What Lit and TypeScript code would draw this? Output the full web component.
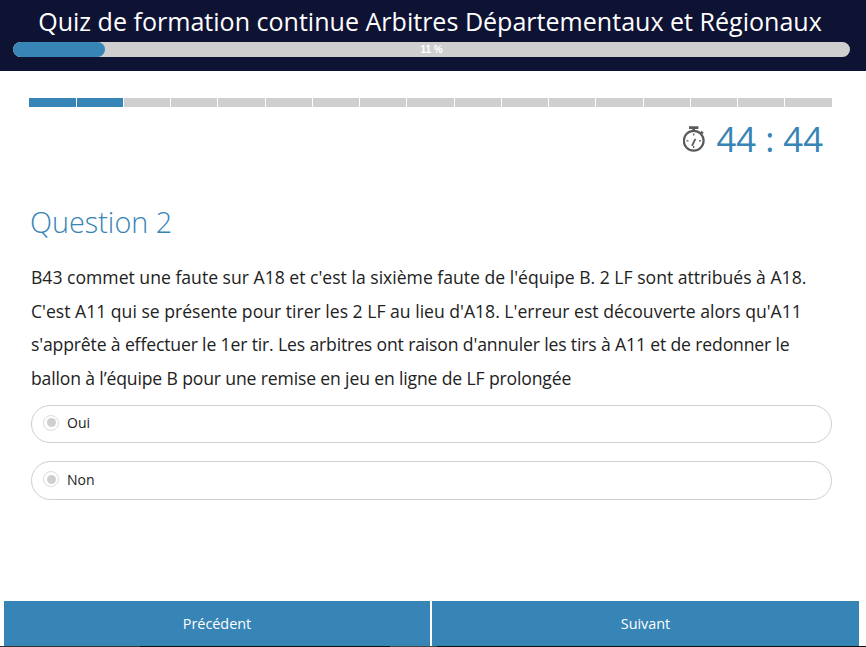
import { LitElement, html, css } from "lit";
import { customElement } from "lit/decorators.js";

@customElement("app-root")
export class AppRoot extends LitElement {
  static styles = css`
    :host {
      display: flex;
      flex-direction: column;
      width: 866px;
      height: 647px;
      overflow: hidden;
      background: #fff;
      font-family: "Open Sans", sans-serif;
    }
    .head {
      background: #0e1233;
      height: 71px;
      box-sizing: border-box;
      padding: 0 16px 0 13px;
      flex: none;
    }
    .title {
      color: #fff;
      font-size: 25.05px;
      line-height: 42px;
      text-align: center;
      white-space: nowrap;
      padding-right: 3px;
    }
    .bar {
      height: 15px;
      background: #cfcfcf;
      border-radius: 8px;
      position: relative;
      overflow: hidden;
    }
    .fill {
      height: 100%;
      width: 11%;
      background: #3784b6;
      border-radius: 8px;
    }
    .pct {
      position: absolute;
      inset: 0;
      text-align: center;
      color: #fff;
      font: bold 10px/15px "Liberation Sans", sans-serif;
    }
    .main {
      flex: 1;
      padding: 27px 34px 0 29px;
      display: flex;
      flex-direction: column;
    }
    .steps {
      display: grid;
      grid-template-columns: repeat(17, 1fr);
      height: 9px;
      margin-left: -0.5px;
      width: 803px;
    }
    .step {
      background: #cfcfcf;
      border-left: 1px solid #fff;
    }
    .step:first-child { border-left: 0; }
    .step.on { background: #3784b6; }
    .timer {
      display: flex;
      justify-content: flex-end;
      align-items: center;
      gap: 10px;
      height: 62px;
      padding-right: 9px;
      color: #3784b6;
      font-size: 34.7px;
    }
    .timer svg { width: 24px; height: 27px; flex: none; }
    .q {
      margin: 26px 0 0 1px;
      font-weight: 300;
      font-size: 28.8px;
      line-height: 54px;
      color: #3784b6;
    }
    .text {
      margin: 12px 0 9.7px 2px;
      font-size: 17.6px;
      line-height: 33.5px;
      color: #222;
      white-space: nowrap;
    }
    .tight { letter-spacing: -0.15px; }
    .opt {
      margin: 0 0 18px 2px;
      height: 38.5px;
      box-sizing: border-box;
      border: 1px solid #cfcfcf;
      border-radius: 20px;
      display: flex;
      align-items: center;
      padding: 0 0 2px 11px;
      gap: 8px;
      font-size: 14px;
      color: #222;
      flex: none;
    }
    .radio {
      width: 16px;
      height: 16px;
      border: 1px solid #dcdcdc;
      border-radius: 50%;
      box-sizing: border-box;
      display: flex;
      align-items: center;
      justify-content: center;
    }
    .radio i {
      display: block;
      width: 9px;
      height: 9px;
      border-radius: 50%;
      background: #cfcfcf;
    }
    .foot {
      flex: none;
      display: grid;
      grid-template-columns: 426px 427px;
      gap: 2px;
      height: 45px;
      padding: 0 7px 0 4px;
      box-sizing: border-box;
    }
    .btn {
      background: #3784b6;
      color: #fff;
      font-size: 14.4px;
      display: flex;
      align-items: center;
      justify-content: center;
    }
    .edge {
      flex: none;
      height: 1px;
      background: linear-gradient(
        to right,
        #333 0 140px,
        #111 140px 390px,
        #444 390px 437px,
        #111 437px 100%
      );
    }
  `;

  render() {
    const steps = Array.from({ length: 17 }, (_, i) => i < 2);
    return html`
      <div class="head">
        <div class="title">Quiz de formation continue Arbitres Départementaux et Régionaux</div>
        <div class="bar"><div class="fill"></div><div class="pct">11 %</div></div>
      </div>
      <div class="main">
        <div class="steps">
          ${steps.map((on) => html`<div class="step ${on ? "on" : ""}"></div>`)}
        </div>
        <div class="timer">
          <svg viewBox="0 0 24 27" fill="none" stroke="#5a5a5a" stroke-width="2.2">
            <circle cx="10.7" cy="15.8" r="9.9"></circle>
            <path d="M6 2.6h9.4M10.7 3v3.5" stroke-width="2.6"></path>
            <path d="M18 6.5l2 2" stroke-width="2"></path>
            <path d="M9 20.8l3.4-7" stroke-width="1.8"></path>
            <path d="M10.7 8.5v2M10.7 21v2M3.4 15.8h2M16 15.8h2" stroke-width="1.3"></path>
          </svg>
          <span>44 : 44</span>
        </div>
        <div class="q">Question 2</div>
        <div class="text">
          <div>B43 commet une faute sur A18 et c'est la sixième faute de l'équipe B. 2 LF sont attribués à A18.</div>
          <div>C'est A11 qui se présente pour tirer les 2 LF au lieu d'A18. L'erreur est découverte alors qu'A11</div>
          <div class="tight">s'apprête à effectuer le 1er tir. Les arbitres ont raison d'annuler les tirs à A11 et de redonner le</div>
          <div class="tight">ballon à l’équipe B pour une remise en jeu en ligne de LF prolongée</div>
        </div>
        <div class="opt"><span class="radio"><i></i></span>Oui</div>
        <div class="opt"><span class="radio"><i></i></span>Non</div>
      </div>
      <div class="foot">
        <div class="btn">Précédent</div>
        <div class="btn">Suivant</div>
      </div>
      <div class="edge"></div>
    `;
  }
}
